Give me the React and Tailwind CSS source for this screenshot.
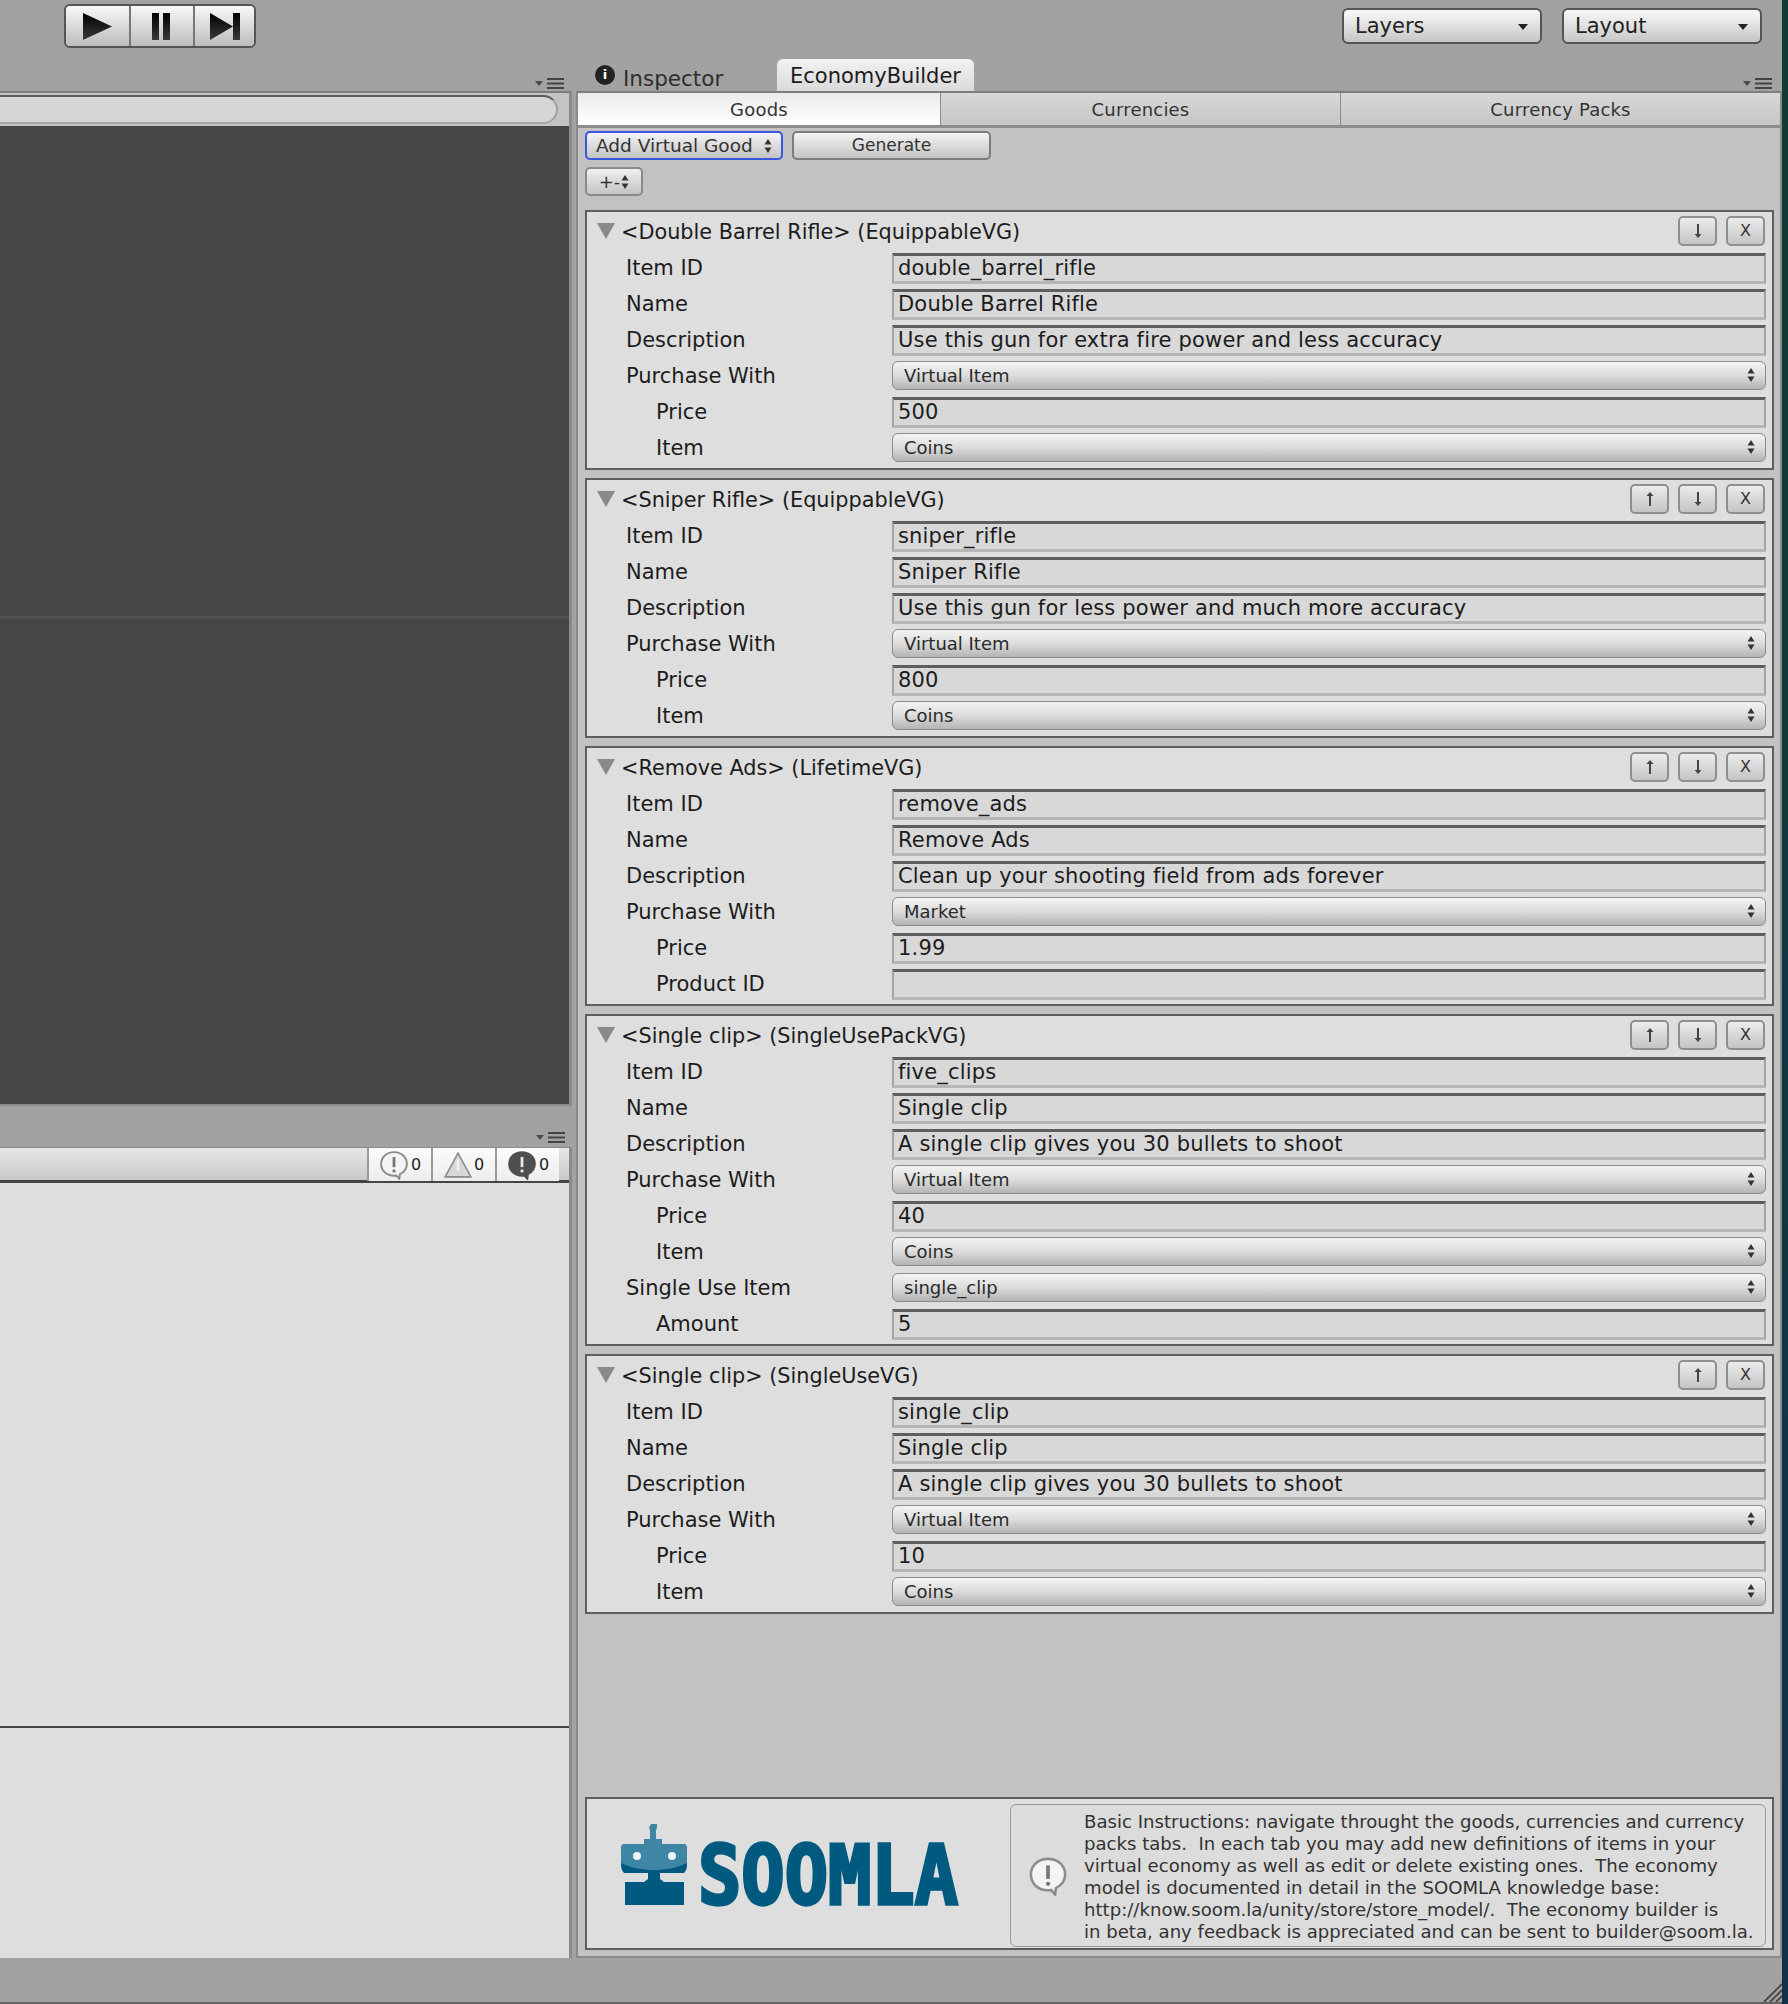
import React from 'react';

const CARDS = [
  { title: '<Double Barrel Rifle> (EquippableVG)', down: true, rows: [
    ['Item ID', 'double_barrel_rifle'], ['Name', 'Double Barrel Rifle'], ['Description', 'Use this gun for extra fire power and less accuracy'],
    ['Purchase With', 'Virtual Item', 'popup'], ['Price', '500', 'sub'], ['Item', 'Coins', 'subpopup'] ] },
  { title: '<Sniper Rifle> (EquippableVG)', up: true, down: true, rows: [
    ['Item ID', 'sniper_rifle'], ['Name', 'Sniper Rifle'], ['Description', 'Use this gun for less power and much more accuracy'],
    ['Purchase With', 'Virtual Item', 'popup'], ['Price', '800', 'sub'], ['Item', 'Coins', 'subpopup'] ] },
  { title: '<Remove Ads> (LifetimeVG)', up: true, down: true, rows: [
    ['Item ID', 'remove_ads'], ['Name', 'Remove Ads'], ['Description', 'Clean up your shooting field from ads forever'],
    ['Purchase With', 'Market', 'popup'], ['Price', '1.99', 'sub'], ['Product ID', '', 'sub'] ] },
  { title: '<Single clip> (SingleUsePackVG)', up: true, down: true, rows: [
    ['Item ID', 'five_clips'], ['Name', 'Single clip'], ['Description', 'A single clip gives you 30 bullets to shoot'],
    ['Purchase With', 'Virtual Item', 'popup'], ['Price', '40', 'sub'], ['Item', 'Coins', 'subpopup'],
    ['Single Use Item', 'single_clip', 'popup'], ['Amount', '5', 'sub'] ] },
  { title: '<Single clip> (SingleUseVG)', up: true, rows: [
    ['Item ID', 'single_clip'], ['Name', 'Single clip'], ['Description', 'A single clip gives you 30 bullets to shoot'],
    ['Purchase With', 'Virtual Item', 'popup'], ['Price', '10', 'sub'], ['Item', 'Coins', 'subpopup'] ] },
];

const Stepper = ({ className = '' }) => (
  <svg width="8" height="14" viewBox="0 0 8 14" className={className}>
    <path d="M4 0L7.5 5.5H.5z M4 14L.5 8.5H7.5z" fill="#333" />
  </svg>
);

const PaneMenu = () => (
  <svg width="30" height="12" viewBox="0 0 30 12" className="shrink-0">
    <path d="M0 3H8L4 8z" fill="#4a4a4a" />
    <path d="M12 1H29M12 5.5H29M12 10H29" stroke="#444" strokeWidth="2" />
  </svg>
);

const AlertBubble = ({ size = 28, fill = '#f4f4f4', stroke = '#8c8c8c', mark = '#777' }) => (
  <svg width={size} height={size} viewBox="0 0 28 28" className="shrink-0">
    <path d="M14 2C7 2 2 6.800 2 13s5 11 12 11c.8 0 1.500 0 2.200-.2L19 27l.5-4.500C23.500 20.500 26 17 26 13 26 6.800 21 2 14 2z" fill={fill} stroke={stroke} strokeWidth="1.800" />
    <path d="M14 6.500V16" stroke={mark} strokeWidth="2.600" />
    <circle cx="14" cy="19.500" r="1.500" fill={mark} />
  </svg>
);

function SmallBtn({ kind }) {
  return (
    <div className="w-[39px] h-[30px] flex items-center justify-center rounded-[5px] border-2 border-[#8f8f8f] bg-linear-to-b from-[#ececec] to-[#c4c4c4]">
      {kind === 'x' ? (
        <span className="text-[16px] leading-none text-[#333]">X</span>
      ) : (
        <svg width="10" height="16" viewBox="0 0 10 16">
          {kind === 'up'
            ? <path d="M5 1L8.500 5H6V15H4V5H1.500z" fill="#444" />
            : <path d="M5 15L8.500 11H6V1H4V11H1.500z" fill="#444" />}
        </svg>
      )}
    </div>
  );
}

function Row({ label, value, kind }) {
  const sub = kind === 'sub' || kind === 'subpopup';
  const popup = kind === 'popup' || kind === 'subpopup';
  return (
    <div className="h-[36px] flex items-center">
      <div className={`w-[305px] shrink-0 pt-[2px] text-[21px] text-[#1c1c1c] ${sub ? 'pl-[69px]' : 'pl-[39px]'}`}>{label}</div>
      {popup ? (
        <div className="w-[874px] h-[29px] mb-[2px] flex items-center justify-between pl-[11px] pr-[10px] rounded-[6px] border border-[#8b8b8b] bg-linear-to-b from-[#f4f4f4] via-[#dcdcdc] to-[#b4b4b4] text-[18px] text-[#2a2a2a]">
          {value}
          <Stepper />
        </div>
      ) : (
        <div className="w-[874px] h-[31px] flex items-center pl-[4px] pt-[2px] tracking-[0.18px] border-t-[3px] border-t-[#5e5e5e] border-x-2 border-x-[#a4a4a4] border-b-[3px] border-b-[#b6b6b6] bg-[#d8d8d8] text-[21px] text-[#1c1c1c]">
          {value}
        </div>
      )}
    </div>
  );
}

function Card({ title, up, down, rows }) {
  return (
    <div className="w-[1189px] border-2 border-[#5e5e5e] bg-[#dedede] mb-[8px] pb-[2px]">
      <div className="h-[38px] flex items-center">
        <svg width="20" height="18" viewBox="0 0 20 18" className="ml-[9px] mb-[1px]">
          <path d="M1 1H19L10 17z" fill="#8a8a8a" />
        </svg>
        <span className="ml-[5px] pt-[3px] text-[20.8px] text-[#1c1c1c]">{title}</span>
        <div className="ml-auto mr-[7px] flex gap-[9px]">
          {up && <SmallBtn kind="up" />}
          {down && <SmallBtn kind="down" />}
          <SmallBtn kind="x" />
        </div>
      </div>
      {rows.map(([l, v, k]) => <Row key={l} label={l} value={v} kind={k} />)}
    </div>
  );
}

function ConsoleCount({ icon }) {
  return (
    <div className="w-[64px] h-[33px] flex items-center justify-center gap-[2px] border-l-2 border-l-[#9a9a9a] bg-linear-to-b from-[#fbfbfb] to-[#ededed] text-[16px] text-[#222]">
      {icon}
      <span>0</span>
    </div>
  );
}

function Logo() {
  return (
    <svg width="345" height="84" viewBox="0 0 345 84" className="shrink-0 ml-[33px] mb-[18px] overflow-visible">
      <path d="M31 1h6v4l-1 2v9h6v5h-18v-5h6v-9l-1-2z" fill="#3f86a4" />
      <path d="M1 26c0-3 1-5 4-5h58c3 0 4 2 4 5v16c0 3-1 6-3 8H4c-2-2-3-5-3-8z" fill="#005a80" />
      <path d="M1 26c0-3 1-5 4-5h58c3 0 4 2 4 5v14c-10 5-22 7-33 7s-23-2-33-7z" fill="#3f86a4" />
      <circle cx="17" cy="33" r="4" fill="#f0f6f8" />
      <circle cx="52" cy="33" r="4" fill="#f0f6f8" />
      <path d="M28 50h12v6l4 3h20v23H5V59h19l4-3z" fill="#005a80" />
      <text transform="translate(78 81) scale(1 1.130)" fontFamily="'DejaVu Sans Mono', monospace" fontWeight="700" fontSize="72" fill="#005a80" stroke="#005a80" strokeWidth="3">SOOMLA</text>
    </svg>
  );
}

export default function App() {
  return (
    <div className="w-[1788px] h-[2004px] overflow-hidden flex bg-[#a2a2a2] font-['DejaVu_Sans',sans-serif]">
      <div className="w-[1782px] flex flex-col">
        {/* Toolbar */}
        <div className="h-[59px] flex items-start">
          <div className="ml-[64px] mt-[4px] h-[44px] w-[192px] flex rounded-[6px] border-2 border-[#555] overflow-hidden">
            {[
              <path key="p" d="M0 0L29 13.500L0 27z" fill="url(#tool)" />,
              <path key="a" d="M5 0H12V27H5zM16 0H23V27H16z" fill="url(#tool)" />,
              <path key="s" d="M0 0L23 13.500L0 27zM23 0H30V27H23z" fill="url(#tool)" />,
            ].map((shape, i) => (
              <div key={i} className={`flex items-center justify-center bg-linear-to-b from-[#f8f8f8] to-[#bdbdbd] ${i === 0 ? 'w-[63px]' : i === 1 ? 'w-[64px] border-l-2 border-l-[#777]' : 'flex-1 border-l-2 border-l-[#777]'}`}>
                <svg width="30" height="27" viewBox="0 0 30 27">
                  <defs>
                    <linearGradient id="tool" x1="0" y1="0" x2="0" y2="1">
                      <stop offset="0" stopColor="#000" />
                      <stop offset="1" stopColor="#3a3a3a" />
                    </linearGradient>
                  </defs>
                  {shape}
                </svg>
              </div>
            ))}
          </div>
          <div className="ml-auto mr-[20px] mt-[8px] flex gap-[20px]">
            {['Layers', 'Layout'].map(t => (
              <div key={t} className="w-[200px] h-[36px] flex items-center justify-between pl-[11px] pr-[12px] pt-[1px] rounded-[6px] border-2 border-[#555] bg-linear-to-b from-[#fafafa] to-[#c6c6c6] text-[21px] text-[#222]">
                {t}
                <svg width="10" height="6" viewBox="0 0 10 6"><path d="M0 0H10L5 6z" fill="#222" /></svg>
              </div>
            ))}
          </div>
        </div>

        {/* Tab strip */}
        <div className="h-[32px] flex items-end">
          <div className="w-[565px] shrink-0 flex justify-end pb-[1px]"><PaneMenu /></div>
          <div className="ml-[30px] h-[32px] pt-[8px] flex items-center gap-[8px] text-[21.500px] text-[#2e2e2e] w-[182px] shrink-0">
            <span className="mb-[8px] w-[20px] h-[20px] rounded-full bg-[#222] text-white text-[13px] font-bold flex items-center justify-center">i</span>
            Inspector
          </div>
          <div className="w-[197px] h-[32px] shrink-0 pt-[4px] flex items-center justify-center rounded-t-[6px] bg-linear-to-b from-[#f2f2f2] to-[#dadada] text-[21px] text-[#1c1c1c]">EconomyBuilder</div>
          <div className="ml-auto mr-[9px] pb-[1px]"><PaneMenu /></div>
        </div>

        <div className="h-[1867px] flex">
          {/* Left panes */}
          <div className="w-[572px] shrink-0 flex flex-col">
            <div className="h-[35px] flex items-center border-t-2 border-t-[#7e7e7e] border-r-[3px] border-r-[#8a8a8a] bg-[#c4c4c4]">
              <div className="w-[558px] h-[29px] rounded-r-full border-y-2 border-r-2 border-t-[#5c5c5c] border-b-[#a8a8a8] border-r-[#a0a0a0] bg-[#d6d6d6]"></div>
            </div>
            <div className="h-[978px] flex flex-col border-r-[3px] border-r-[#8a8a8a] bg-[#464646]">
              <div className="h-[493px] border-b-[3px] border-b-[#515151]"></div>
            </div>
            <div className="h-[43px] flex items-end justify-end pr-[6px] pb-[3px] border-t-2 border-t-[#8a8a8a]"><PaneMenu /></div>
            <div className="flex-1 flex flex-col border-r-[3px] border-r-[#8a8a8a] bg-[#dedede]">
              <div className="h-[36px] flex justify-end pr-[10px] border-t border-t-[#8a8a8a] border-b-[3px] border-b-[#444] bg-linear-to-b from-[#e8e8e8] to-[#c8c8c8]">
                <ConsoleCount icon={<AlertBubble size={30} />} />
                <ConsoleCount icon={
                  <svg width="28" height="28" viewBox="0 0 26 26" className="shrink-0">
                    <path d="M13 2L25 24H1z" fill="#d8d8d8" stroke="#8c8c8c" strokeWidth="1.500" />
                    <path d="M13 8V18" stroke="#f4f4f4" strokeWidth="2.500" />
                  </svg>
                } />
                <ConsoleCount icon={<AlertBubble size={30} fill="#4f4f4f" stroke="#4f4f4f" mark="#e8e8e8" />} />
              </div>
              <div className="h-[545px] border-b-2 border-b-[#444]"></div>
            </div>
          </div>

          {/* EconomyBuilder */}
          <div className="ml-[4px] w-[1206px] flex flex-col border-2 border-[#8a8a8a] border-t-[#7e7e7e] bg-[#c2c2c2]">
            <div className="h-[32px] flex shrink-0 text-[18px] tracking-[0.2px] text-[#333] border-b-[3px] border-b-[#8c8c8c] box-content">
              <div className="w-[362px] pt-[1px] flex items-center justify-center bg-linear-to-b from-[#ebebeb] to-white">Goods</div>
              <div className="w-[400px] pt-[1px] flex items-center justify-center border-l border-l-[#8c8c8c] bg-linear-to-b from-[#d8d8d8] to-[#c6c6c6]">Currencies</div>
              <div className="flex-1 pt-[1px] flex items-center justify-center border-l border-l-[#8c8c8c] bg-linear-to-b from-[#d8d8d8] to-[#c6c6c6]">Currency Packs</div>
            </div>
            <div className="pl-[7px] flex-1 flex flex-col">
              <div className="mt-[3px] flex gap-[9px]">
                <div className="w-[198px] h-[29px] flex items-center justify-between pl-[9px] pr-[9px] rounded-[5px] border-2 border-[#3a55e0] bg-linear-to-b from-[#f4f4f4] to-[#c4c4c4] text-[18.500px] text-[#333]">
                  Add Virtual Good
                  <Stepper />
                </div>
                <div className="w-[199px] h-[29px] flex items-center justify-center rounded-[5px] border-2 border-[#7c7c7c] bg-linear-to-b from-[#f4f4f4] to-[#c4c4c4] text-[17px] text-[#333]">Generate</div>
              </div>
              <div className="mt-[7px] w-[58px] h-[29px] flex items-center justify-center gap-[1px] rounded-[5px] border-2 border-[#8a8a8a] bg-linear-to-b from-[#f0f0f0] to-[#c4c4c4] text-[18px] text-[#333]">
                +-
                <Stepper />
              </div>
              <div className="mt-[14px]">
                {CARDS.map(c => <Card key={c.title} {...c} />)}
              </div>
              <div className="mt-auto mb-[6px] w-[1189px] h-[153px] flex items-center border-2 border-[#5e5e5e] bg-[#dedede]">
                <Logo />
                <div className="ml-[45px] mb-[1px] self-end w-[756px] h-[143px] flex items-center rounded-[6px] border border-[#999] bg-[#dcdcdc]">
                  <div className="w-[73px] shrink-0 flex justify-center"><AlertBubble size={40} /></div>
                  <p className="pt-[2px] text-[18.100px] leading-[22px] text-[#333] whitespace-pre">{'Basic Instructions: navigate throught the goods, currencies and currency\npacks tabs.  In each tab you may add new definitions of items in your\nvirtual economy as well as edit or delete existing ones.  The economy\nmodel is documented in detail in the SOOMLA knowledge base:\nhttp://know.soom.la/unity/store/store_model/.  The economy builder is\nin beta, any feedback is appreciated and can be sent to builder@soom.la.'}</p>
                </div>
              </div>
            </div>
          </div>
        </div>

        {/* Status bar */}
        <div className="h-[46px] flex items-end justify-end border-b-2 border-b-[#666]">
          <svg width="22" height="22" viewBox="0 0 22 22">
            <path d="M22 4L4 22M22 10L10 22M22 16L16 22" stroke="#444" strokeWidth="1.800" />
          </svg>
        </div>
      </div>
      <div className="flex-1 bg-linear-to-b from-[#123a34] to-[#123049]"></div>
    </div>
  );
}
